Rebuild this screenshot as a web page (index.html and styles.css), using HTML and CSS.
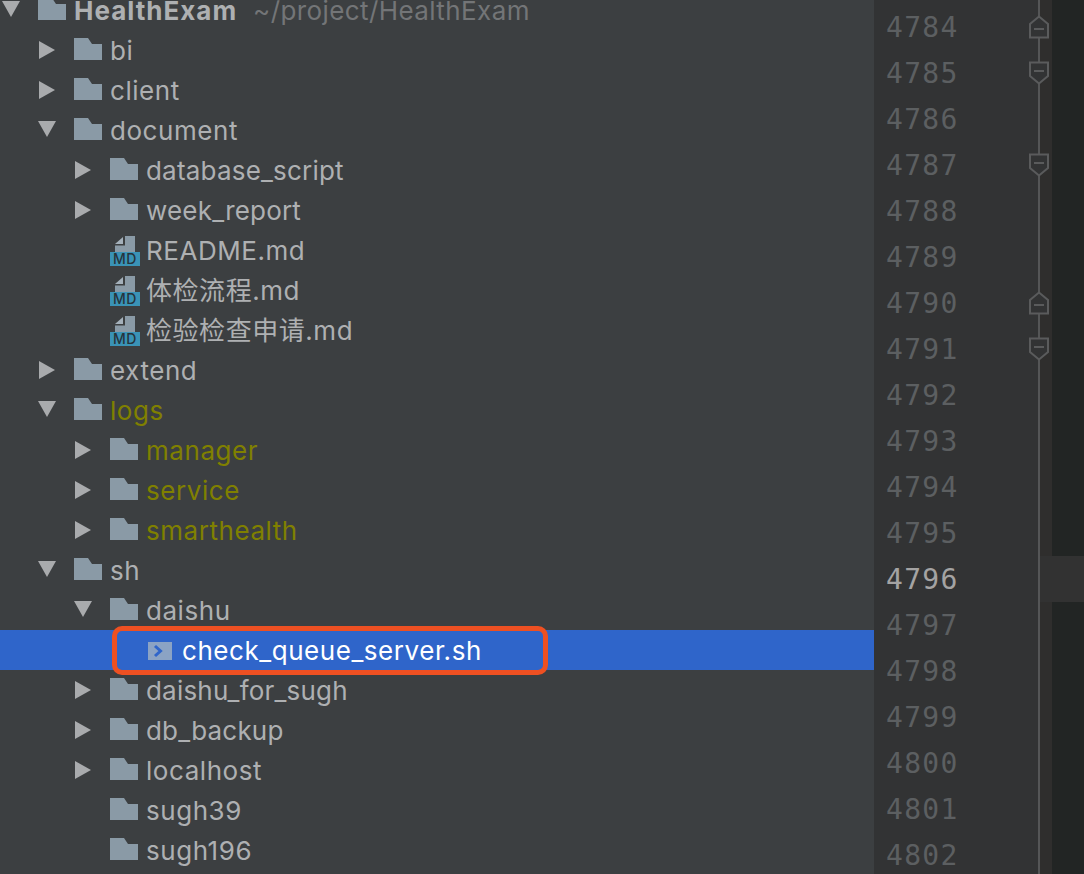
FILE: index.html
```html
<!DOCTYPE html>
<html lang="en">
<head>
<meta charset="utf-8">
<title>HealthExam</title>
<link rel="stylesheet" href="styles.css">
</head>
<body>
<svg class="defs" width="0" height="0" aria-hidden="true">
  <symbol id="folder" viewBox="0 0 28 22"><path d="M0 0H14L18 6H28V22H0Z" fill="#8a9aa6"/></symbol>
  <symbol id="right" viewBox="0 0 16 18"><path d="M0 0L16 9L0 18Z" fill="#a9abad"/></symbol>
  <symbol id="down" viewBox="0 0 18 16"><path d="M0 0H18L9 16Z" fill="#a9abad"/></symbol>
  <symbol id="doc" viewBox="0 0 20 16"><path d="M10 0H20V16H0V9.500H10Z" fill="#8a9aa6"/><path d="M0 8L8 1V8Z" fill="#a4b0ba"/></symbol>
  <symbol id="up-fold" viewBox="0 0 20 24"><path d="M1 22.500V9L10 1.500L19 9V22.500Z" fill="#323334" stroke="#5a5b5c" stroke-width="2"/><path d="M5 14H15" stroke="#5a5b5c" stroke-width="2"/></symbol>
  <symbol id="down-fold" viewBox="0 0 20 24"><path d="M1 1.500V15L10 22.500L19 15V1.500Z" fill="#323334" stroke="#5a5b5c" stroke-width="2"/><path d="M5 10H15" stroke="#5a5b5c" stroke-width="2"/></symbol>
</svg>
<main class="window">
  <section class="tree">
    <div class="row level-0"><svg class="arrow arrow-down"><use href="#down"/></svg><svg class="folder"><use href="#folder"/></svg><b class="label root-name">HealthExam</b><span class="label path">~/project/HealthExam</span></div>
    <div class="row level-1"><svg class="arrow arrow-right"><use href="#right"/></svg><svg class="folder"><use href="#folder"/></svg><span class="label">bi</span></div>
    <div class="row level-1"><svg class="arrow arrow-right"><use href="#right"/></svg><svg class="folder"><use href="#folder"/></svg><span class="label">client</span></div>
    <div class="row level-1"><svg class="arrow arrow-down"><use href="#down"/></svg><svg class="folder"><use href="#folder"/></svg><span class="label">document</span></div>
    <div class="row level-2"><svg class="arrow arrow-right"><use href="#right"/></svg><svg class="folder"><use href="#folder"/></svg><span class="label snug">database_script</span></div>
    <div class="row level-2"><svg class="arrow arrow-right"><use href="#right"/></svg><svg class="folder"><use href="#folder"/></svg><span class="label snug">week_report</span></div>
    <div class="row level-2"><i class="arrow"></i><div class="md"><svg class="md-doc"><use href="#doc"/></svg><em class="md-tag">MD</em></div><span class="label">README.md</span></div>
    <div class="row level-2"><i class="arrow"></i><div class="md"><svg class="md-doc"><use href="#doc"/></svg><em class="md-tag">MD</em></div><span class="label">体检流程.md</span></div>
    <div class="row level-2"><i class="arrow"></i><div class="md"><svg class="md-doc"><use href="#doc"/></svg><em class="md-tag">MD</em></div><span class="label">检验检查申请.md</span></div>
    <div class="row level-1"><svg class="arrow arrow-right"><use href="#right"/></svg><svg class="folder"><use href="#folder"/></svg><span class="label">extend</span></div>
    <div class="row level-1 ignored"><svg class="arrow arrow-down"><use href="#down"/></svg><svg class="folder"><use href="#folder"/></svg><span class="label">logs</span></div>
    <div class="row level-2 ignored"><svg class="arrow arrow-right"><use href="#right"/></svg><svg class="folder"><use href="#folder"/></svg><span class="label">manager</span></div>
    <div class="row level-2 ignored"><svg class="arrow arrow-right"><use href="#right"/></svg><svg class="folder"><use href="#folder"/></svg><span class="label">service</span></div>
    <div class="row level-2 ignored"><svg class="arrow arrow-right"><use href="#right"/></svg><svg class="folder"><use href="#folder"/></svg><span class="label">smarthealth</span></div>
    <div class="row level-1"><svg class="arrow arrow-down"><use href="#down"/></svg><svg class="folder"><use href="#folder"/></svg><span class="label">sh</span></div>
    <div class="row level-2"><svg class="arrow arrow-down"><use href="#down"/></svg><svg class="folder"><use href="#folder"/></svg><span class="label">daishu</span></div>
    <div class="row level-3 selected">
      <svg class="sh-icon" viewBox="0 0 24 18"><rect width="24" height="18" fill="#8ba3c4"/><path d="M7 4L12.500 9L7 14" fill="none" stroke="#2f65ca" stroke-width="3"/></svg>
      <span class="label">check_queue_server.sh</span>
      <div class="callout"></div>
    </div>
    <div class="row level-2"><svg class="arrow arrow-right"><use href="#right"/></svg><svg class="folder"><use href="#folder"/></svg><span class="label snug">daishu_for_sugh</span></div>
    <div class="row level-2"><svg class="arrow arrow-right"><use href="#right"/></svg><svg class="folder"><use href="#folder"/></svg><span class="label snug">db_backup</span></div>
    <div class="row level-2"><svg class="arrow arrow-right"><use href="#right"/></svg><svg class="folder"><use href="#folder"/></svg><span class="label">localhost</span></div>
    <div class="row level-2"><i class="arrow"></i><svg class="folder"><use href="#folder"/></svg><span class="label">sugh39</span></div>
    <div class="row level-2"><i class="arrow"></i><svg class="folder"><use href="#folder"/></svg><span class="label">sugh196</span></div>
  </section>
  <section class="gutter">
    <div class="line"><span class="num">4783</span><div class="rule"></div><div class="margin"></div></div>
    <div class="line"><span class="num">4784</span><div class="rule"><svg class="fold"><use href="#up-fold"/></svg></div><div class="margin"></div></div>
    <div class="line"><span class="num">4785</span><div class="rule"><svg class="fold"><use href="#down-fold"/></svg></div><div class="margin"></div></div>
    <div class="line"><span class="num">4786</span><div class="rule"></div><div class="margin"></div></div>
    <div class="line"><span class="num">4787</span><div class="rule"><svg class="fold"><use href="#down-fold"/></svg></div><div class="margin"></div></div>
    <div class="line"><span class="num">4788</span><div class="rule"></div><div class="margin"></div></div>
    <div class="line"><span class="num">4789</span><div class="rule"></div><div class="margin"></div></div>
    <div class="line"><span class="num">4790</span><div class="rule"><svg class="fold"><use href="#up-fold"/></svg></div><div class="margin"></div></div>
    <div class="line"><span class="num">4791</span><div class="rule"><svg class="fold"><use href="#down-fold"/></svg></div><div class="margin"></div></div>
    <div class="line"><span class="num">4792</span><div class="rule"></div><div class="margin"></div></div>
    <div class="line"><span class="num">4793</span><div class="rule"></div><div class="margin"></div></div>
    <div class="line"><span class="num">4794</span><div class="rule"></div><div class="margin"></div></div>
    <div class="line"><span class="num">4795</span><div class="rule"></div><div class="margin"></div></div>
    <div class="line current"><span class="num">4796</span><div class="rule"></div><div class="margin"></div></div>
    <div class="line"><span class="num">4797</span><div class="rule"></div><div class="margin"></div></div>
    <div class="line"><span class="num">4798</span><div class="rule"></div><div class="margin"></div></div>
    <div class="line"><span class="num">4799</span><div class="rule"></div><div class="margin"></div></div>
    <div class="line"><span class="num">4800</span><div class="rule"></div><div class="margin"></div></div>
    <div class="line"><span class="num">4801</span><div class="rule"></div><div class="margin"></div></div>
    <div class="line"><span class="num">4802</span><div class="rule"></div><div class="margin"></div></div>
  </section>
</main>
</body>
</html>
```
FILE: styles.css
```css
html, body {
  margin: 0;
  height: 100%;
  overflow: hidden;
  background: #3c3f41;
}
.defs {
  position: absolute;
}
.window {
  display: flex;
  height: 874px;
  overflow: hidden;
}
.tree {
  width: 874px;
  flex: none;
  margin-top: -10px;
  background: #3c3f41;
  color: #aeb0b2;
  font: 26px/40px Inter, "Noto Sans CJK SC", sans-serif;
  letter-spacing: 0.55px;
}
.row {
  display: flex;
  align-items: center;
  height: 40px;
  position: relative;
  white-space: nowrap;
}
.label {
  margin-top: 2px;
}
.snug {
  letter-spacing: 0.2px;
}
.level-0 { padding-left: 2px; }
.level-1 { padding-left: 38px; }
.level-2 { padding-left: 74px; }
.level-3 { padding-left: 148px; }
.arrow {
  flex: none;
  width: 18px;
  height: 18px;
  margin-right: 18px;
}
.arrow-down {
  margin-top: -3px;
}
.folder {
  flex: none;
  width: 28px;
  height: 22px;
  margin-right: 8px;
  margin-top: -2px;
}
.root-name {
  font-weight: 700;
  margin-right: 16px;
  letter-spacing: 1px;
}
.path {
  color: #737577;
  letter-spacing: 0.4px;
}
.ignored {
  color: #808000;
}
.md {
  flex: none;
  width: 30px;
  margin-right: 6px;
  margin-top: 2px;
  display: flex;
  flex-direction: column;
  align-items: center;
}
.md-doc {
  width: 20px;
  height: 16px;
  display: block;
}
.md-tag {
  display: block;
  width: 30px;
  height: 14px;
  background: #3a93b6;
  color: #27343c;
  font: normal 500 14px/14px Inter, sans-serif;
  letter-spacing: 0.5px;
  text-align: center;
}
.selected {
  background: #2f65ca;
  color: #fff;
}
.sh-icon {
  flex: none;
  width: 24px;
  height: 18px;
  margin-right: 10px;
  margin-top: 2px;
}
.callout {
  position: absolute;
  left: 112px;
  top: -4px;
  width: 436px;
  height: 49px;
  box-sizing: border-box;
  border: 5px solid #ee5022;
  border-radius: 10px;
}
.gutter {
  flex: 1;
  margin-top: -42px;
  font: 28px/48px "DejaVu Sans Mono", monospace;
  color: #5c5f61;
}
.line {
  display: grid;
  grid-template-columns: 164px 2px 12px 1fr;
  height: 46px;
  background: #222524;
}
.num {
  background: #323334;
  padding-left: 12px;
  letter-spacing: 1.300px;
  height: 46px;
  overflow: hidden;
}
.rule {
  background: #555657;
  position: relative;
}
.margin {
  background: #2f2e2d;
}
.fold {
  position: absolute;
  left: -9px;
  top: 11px;
  width: 20px;
  height: 24px;
}
.current {
  background: #323232;
}
.current .num {
  color: #a4a3a3;
}
.current .margin {
  background: #323232;
}
```
